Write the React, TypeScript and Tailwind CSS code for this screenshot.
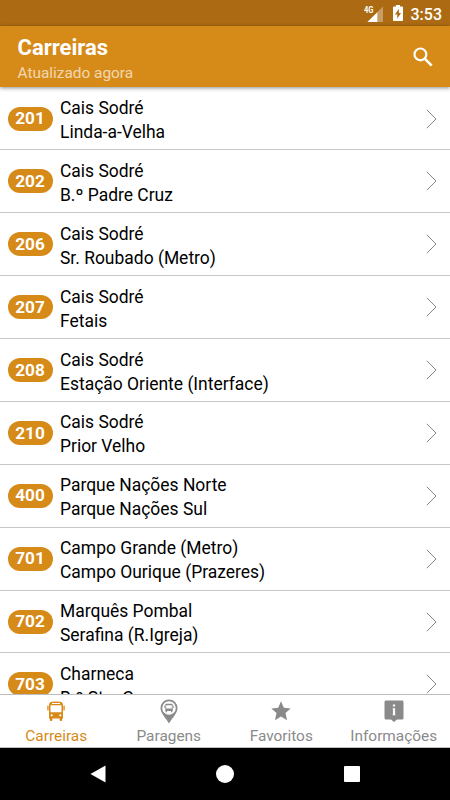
import React, { useState } from "react";
import clsx from "clsx";

const routes = [
   { id: "201", from: "Cais Sodré", to: "Linda-a-Velha" },
   { id: "202", from: "Cais Sodré", to: "B.º Padre Cruz" },
   { id: "206", from: "Cais Sodré", to: "Sr. Roubado (Metro)" },
   { id: "207", from: "Cais Sodré", to: "Fetais" },
   { id: "208", from: "Cais Sodré", to: "Estação Oriente (Interface)" },
   { id: "210", from: "Cais Sodré", to: "Prior Velho" },
   { id: "400", from: "Parque Nações Norte", to: "Parque Nações Sul" },
   { id: "701", from: "Campo Grande (Metro)", to: "Campo Ourique (Prazeres)" },
   { id: "702", from: "Marquês Pombal", to: "Serafina (R.Igreja)" },
   { id: "703", from: "Charneca", to: "B.º Sta. Cruz" },
];

function BusIcon() {
   return (
      <svg width="20" height="22" viewBox="0 0 20 22" fill="currentColor">
         <path
            fillRule="evenodd"
            d="M5.500 1.800Q10 1 14.500 1.800q2.500.5 2.500 2.900v13.800H3V4.700q0-2.400 2.500-2.900zM6 3v.9h8V3zM4.500 5.300v6.900h11V5.300zM5.700 14.200a1.100 1.100 0 1 0 0 2.200 1.100 1.100 0 0 0 0-2.200zm8.600 0a1.100 1.100 0 1 0 0 2.200 1.100 1.100 0 0 0 0-2.200z"
         />
         <rect x="3.800" y="17" width="2.600" height="4" rx="1.100" />
         <rect x="13.600" y="17" width="2.600" height="4" rx="1.100" />
         <rect x="1.300" y="5.500" width="1.300" height="5" rx=".6" />
         <rect x="17.400" y="5.500" width="1.300" height="5" rx=".6" />
      </svg>
   );
}

function StopIcon() {
   return (
      <svg width="18" height="25" viewBox="0 0 18 25" fill="currentColor">
         <path
            fillRule="evenodd"
            d="M9 .5a8.500 8.500 0 0 1 8.500 8.500c0 5.500-5.500 10-8.500 15.500C6 19 .5 14.500 .5 9A8.500 8.500 0 0 1 9 .5zm0 1.700a6.800 6.800 0 1 0 0 13.600 6.800 6.800 0 0 0 0-13.600z"
         />
         <path
            fillRule="evenodd"
            d="M6.700 4.700h4.600c.9 0 1.400.5 1.400 1.400v6h-.4v1.100h-1.300v-1.100H7v1.100H5.700v-1.100h-.4v-6c0-.9.5-1.400 1.400-1.400zM6.200 6.300v3.200h5.600V6.300z"
         />
         <path d="M4.300 6.500h.6v2.500h-.6zM13.100 6.500h.6v2.500h-.6z" />
      </svg>
   );
}

function StarIcon() {
   return (
      <svg width="20" height="20" viewBox="0 0 20 20" fill="currentColor">
         <path d="M10 .3l2.800 6.400 6.900.7-5.200 4.600 1.500 7.200-6-3.700-6 3.700 1.500-7.200L.3 7.400l6.900-.7z" />
      </svg>
   );
}

function InfoIcon() {
   return (
      <svg width="20" height="22" viewBox="0 0 20 22" fill="currentColor">
         <path
            fillRule="evenodd"
            d="M2 .5h16c.9 0 1.500.6 1.500 1.500v16c0 .9-.6 1.500-1.500 1.500h-5L10 22l-3-2.500H2c-.9 0-1.500-.6-1.500-1.500V2C.5 1.100 1.100.5 2 .5zM8.900 4.500v2h2.200v-2zm-.4 3.700v.8h.4v5.400h-.4v.8h3v-.8h-.4V8.200z"
         />
      </svg>
   );
}

const tabs = [
   { label: "Carreiras", icon: <BusIcon /> },
   { label: "Paragens", icon: <StopIcon /> },
   { label: "Favoritos", icon: <StarIcon /> },
   { label: "Informações", icon: <InfoIcon /> },
];

function StatusBar() {
   return (
      <div className="flex h-[26px] shrink-0 items-center justify-end bg-[#ac6b12] pr-[9px] text-white">
         <svg width="20" height="19" viewBox="0 0 20 19" className="mr-[9px]">
            <path d="M19 2.500v15.500H3.500z" fill="#fff" fillOpacity=".35" />
            <path d="M13.300 8.200V18H3.500z" fill="#fff" />
            <text x="0" y="9" fontSize="9" fontWeight="700" fill="#fff" textLength="9.500" lengthAdjust="spacingAndGlyphs">
               4G
            </text>
         </svg>
         <svg width="10" height="16" viewBox="0 0 10 16" className="mr-[8px]" fill="#fff">
            <path fillRule="evenodd" d="M3 0h4v1.500h2c.6 0 1 .4 1 1V15c0 .6-.4 1-1 1H1c-.6 0-1-.4-1-1V2.500c0-.6.400-1 1-1h2zM5.900 3.800L2 9.400h2.300v4.300L8 8.100H5.900z" />
         </svg>
         <span className="-mr-px pt-[3px] text-[16px] leading-none font-medium">3:53</span>
      </div>
   );
}

export default function App() {
   const [activeTab, setActiveTab] = useState("Carreiras");

   return (
      <div className="flex h-[800px] w-[450px] flex-col overflow-hidden bg-white font-[Roboto,sans-serif] text-black">
         <StatusBar />

         {/* Header */}
         <header className="z-10 flex h-[61px] shrink-0 items-center justify-between bg-[#d68a18] pr-[17px] pl-[17.500px] text-white shadow-[0_1px_4px_rgba(0,0,0,0.45)]">
            <div className="pt-[6px]">
               <h1 className="text-[22px] leading-[26px] font-bold">Carreiras</h1>
               <p className="text-[15.400px] leading-[24px] text-white/65">Atualizado agora</p>
            </div>
            <button aria-label="Pesquisar">
               <svg width="20" height="20" viewBox="0 0 20 20" fill="none" stroke="#fff" strokeWidth="2.200">
                  <circle cx="7.400" cy="7.400" r="5.900" />
                  <path d="M11.700 11.700l7 7" strokeWidth="2.600" />
               </svg>
            </button>
         </header>

         {/* Route list */}
         <main className="min-h-0 flex-1 overflow-hidden pt-[0.600px]">
            {routes.map(route => (
               <div key={route.id} className="flex h-[62.890px] items-center border-b border-[#c8c8c8] pr-[13px] pl-[7.500px]">
                  <div className="flex h-[24px] w-[45px] items-center justify-center rounded-full bg-[#d68a18] pt-px text-[17.200px] font-bold text-white">
                     {route.id}
                  </div>
                  <div className="ml-[7.500px] flex-1 pt-[3px] text-[17.470px] leading-[24px]">
                     <div>{route.from}</div>
                     <div>{route.to}</div>
                  </div>
                  <svg width="11" height="20" viewBox="0 0 11 20" fill="none" stroke="#888" strokeWidth="1">
                     <path d="M.8.800L10 10 .8 19.200" />
                  </svg>
               </div>
            ))}
         </main>

         {/* Bottom tabs */}
         <nav className="grid h-[54px] shrink-0 grid-cols-4 border-t border-b border-[#bdbdbd] bg-white">
            {tabs.map(tab => (
               <button
                  key={tab.label}
                  onClick={() => setActiveTab(tab.label)}
                  className={clsx(
                     "flex flex-col items-center",
                     activeTab === tab.label ? "text-[#d68a18]" : "text-[#8a8a8a]"
                  )}
               >
                  <span className="flex h-[32px] items-center justify-center">{tab.icon}</span>
                  <span className="text-[15.400px] leading-[18px]">{tab.label}</span>
               </button>
            ))}
         </nav>

         {/* System navigation */}
         <div className="flex h-[52px] shrink-0 items-center justify-between bg-black pr-[90px] pl-[90px]">
            <svg width="16" height="18" viewBox="0 0 16 18" fill="#fff">
               <path d="M15.500.5v17L.5 9z" />
            </svg>
            <div className="h-[18px] w-[18px] rounded-full bg-white" />
            <div className="h-[16px] w-[16px] rounded-[1px] bg-white" />
         </div>
      </div>
   );
}
